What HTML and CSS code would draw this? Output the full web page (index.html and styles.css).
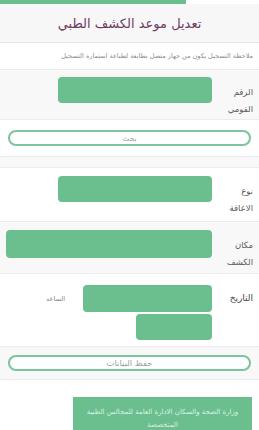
FILE: index.html
```html
<!DOCTYPE html>
<html lang="ar" dir="rtl">
<head>
  <meta charset="UTF-8" />
  <meta name="viewport" content="width=device-width, initial-scale=1.0"/>
  <title>تعديل موعد الكشف الطبي</title>
  <link rel="stylesheet" href="styles.css">
</head>
<body>

<div class="progress"><div class="progress-bar"></div></div>

<div class="header">
  <h1>تعديل موعد الكشف الطبي</h1>
</div>

<div class="note">ملاحظة التسجيل يكون من جهاز متصل بطابعة لطباعة استمارة التسجيل</div>

<div class="row row-gray row-national">
  <label>الرقم القومي</label>
  <div class="field field-national"></div>
</div>

<div class="row row-btn">
  <button type="button" class="btn-outline">بحث</button>
</div>

<div class="row row-gray row-empty"></div>

<div class="row row-disability">
  <label>نوع الاعاقة</label>
  <div class="field field-national"></div>
</div>

<div class="row row-gray row-place">
  <label>مكان الكشف</label>
  <div class="field field-place"></div>
</div>

<div class="row row-date">
  <label class="label-date">التاريخ</label>
  <div class="date-group">
    <div class="field field-date"></div>
    <span class="time-label">الساعه</span>
    <div class="field field-time"></div>
  </div>
</div>

<div class="row row-gray row-btn row-save">
  <button type="button" class="btn-outline btn-save">حفظ البيانات</button>
</div>

<div class="footer">
  <div class="footer-box">وزارة الصحة والسكان الادارة العامة للمجالس الطبية المتخصصة</div>
</div>

</body>
</html>
```

FILE: styles.css
```css
body {
  margin: 0;
  direction: rtl;
  font-family: "DejaVu Sans", sans-serif;
  background: #fff;
}

.progress {
  direction: ltr;
  height: 4px;
  background: #fff;
}

.progress-bar {
  width: 186px;
  height: 4px;
  background: #6bbf8e;
}

.header {
  height: 38px;
  background: #f7f7f7;
  border-bottom: 1px solid #e8e8e8;
  display: flex;
  align-items: center;
  justify-content: center;
}

h1 {
  margin: 0;
  font-size: 13px;
  font-weight: normal;
  color: #6e3b62;
}

.note {
  height: 26px;
  padding: 0 6px;
  font-size: 6.5px;
  color: #8c8c8c;
  display: flex;
  align-items: center;
  border-bottom: 1px solid #ececec;
}

.row {
  display: flex;
  align-items: flex-start;
  padding: 7px 6px 0 6px;
  border-bottom: 1px solid #ececec;
  box-sizing: border-box;
}

.row-gray {
  background: #f8f8f8;
}

.row label {
  width: 41px;
  flex-shrink: 0;
  box-sizing: border-box;
  padding: 7px 0 0 10px;
  font-size: 8.5px;
  line-height: 17px;
  color: #5a5a5a;
}

.field {
  background: #6bbf8e;
  border-radius: 4px;
}

.row-national { height: 50px; }
.row-disability { height: 54px; padding-top: 8px; }
.row-place { height: 52px; padding-top: 8px; }
.row-empty { height: 11px; padding: 0; }

.field-national {
  width: 154px;
  height: 26px;
}

.field-place {
  width: 206px;
  height: 28px;
}

.row-date {
  height: 73px;
  padding-top: 11px;
}

.row-date .label-date {
  padding-top: 5px;
  color: #444;
  font-size: 9px;
}

.date-group {
  width: 206px;
  display: flex;
  flex-wrap: wrap;
  align-items: center;
}

.field-date {
  width: 129px;
  height: 27px;
}

.time-label {
  margin-right: 18px;
  font-size: 6.5px;
  color: #888;
}

.field-time {
  width: 76px;
  height: 26px;
  margin-top: 2px;
}

.row-btn {
  height: 37px;
  padding: 10px 8px 0 8px;
}

.row-save {
  height: 33px;
  padding-top: 8px;
}

.btn-outline {
  width: 100%;
  height: 16px;
  padding: 0;
  border: 2px solid #7dc39c;
  border-radius: 9px;
  background: #fff;
  font-family: "DejaVu Sans", sans-serif;
  font-size: 7.5px;
  color: #a0a0a0;
}

.btn-save {
  font-size: 8.5px;
}

.footer {
  padding: 17px 7px 0 7px;
}

.footer-box {
  width: 179px;
  height: 40px;
  box-sizing: border-box;
  padding: 9px 10px 0 10px;
  background: #6bbf8e;
  color: #dcf1e4;
  font-size: 7px;
  line-height: 13px;
  text-align: center;
}
```
